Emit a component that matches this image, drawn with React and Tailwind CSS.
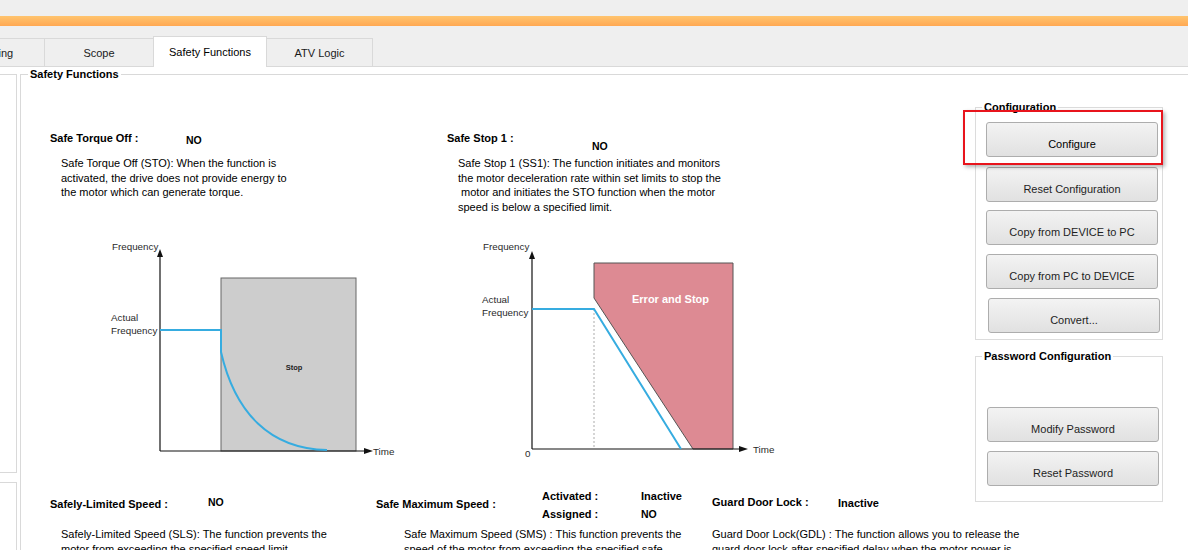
const Btn = ({ children, className = '' }) => (
  <button
    className={`flex h-[35px] w-[172px] justify-center rounded-[3px] border border-[#adadad] bg-linear-to-b from-[#f3f3f3] to-[#e1e1e1] pt-[14px] text-[11px] leading-[14px] text-[#1e1e1e] ${className}`}
  >
    {children}
  </button>
);

const Tab = ({ children, className = '' }) => (
  <div
    className={`flex h-[28px] items-center justify-center border-x border-t border-[#d9d9d9] bg-[#efefef] text-[#1a1a1a] ${className}`}
  >
    {children}
  </div>
);

const StoChart = () => (
  <svg width="300" height="225" className="ml-[50px] mt-[24px] block" fontFamily="Liberation Sans, Arial, sans-serif">
    <text x="12" y="12" fontSize="9.8" fill="#2a2a2a">Frequency</text>
    <rect x="121" y="40" width="135" height="173" fill="#cdcdcd" stroke="#666" strokeWidth="1" />
    <line x1="60" y1="17" x2="60" y2="213" stroke="#111" strokeWidth="1.2" />
    <polygon points="60,11 57,19 63,19" fill="#111" />
    <line x1="60" y1="213" x2="266" y2="213" stroke="#111" strokeWidth="1.2" />
    <polygon points="273,213 264,210 264,216" fill="#111" />
    <text x="273" y="216.5" fontSize="9.8" fill="#2a2a2a">Time</text>
    <text x="11" y="83" fontSize="9.8" fill="#2a2a2a">Actual</text>
    <text x="11" y="96" fontSize="9.8" fill="#2a2a2a">Frequency</text>
    <text x="194" y="132" textAnchor="middle" fontSize="7.5" fontWeight="bold" fill="#222">Stop</text>
    <path d="M60,92 H121 V114 C135,175 170,211 227,212" fill="none" stroke="#36ace0" strokeWidth="2" />
  </svg>
);

const Ss1Chart = () => (
  <svg width="310" height="225" className="ml-[23px] mt-[24px] block" fontFamily="Liberation Sans, Arial, sans-serif">
    <text x="13" y="12" fontSize="9.8" fill="#2a2a2a">Frequency</text>
    <polygon points="124,25 263,25 263,211 223,211 124,60" fill="#dd8a93" stroke="#555" strokeWidth="1" />
    <line x1="124" y1="71" x2="124" y2="211" stroke="#888" strokeWidth="0.7" strokeDasharray="2 2" />
    <line x1="62" y1="19" x2="62" y2="211" stroke="#111" strokeWidth="1.2" />
    <polygon points="62,13 59,21 65,21" fill="#111" />
    <line x1="62" y1="211" x2="271" y2="211" stroke="#111" strokeWidth="1.2" />
    <polygon points="278,211 269,208 269,214" fill="#111" />
    <text x="283" y="214.5" fontSize="9.8" fill="#2a2a2a">Time</text>
    <text x="55" y="219" fontSize="9.8" fill="#2a2a2a">0</text>
    <text x="162" y="65" fontSize="11" fontWeight="bold" fill="#fff">Error and Stop</text>
    <text x="12" y="65" fontSize="9.8" fill="#2a2a2a">Actual</text>
    <text x="12" y="78" fontSize="9.8" fill="#2a2a2a">Frequency</text>
    <polyline points="62,71 124,71 211,211" fill="none" stroke="#36ace0" strokeWidth="2" />
  </svg>
);

export default function App() {
  return (
    <div className="h-[550px] w-[1188px] overflow-hidden bg-white font-['Liberation_Sans',Arial,sans-serif] text-[11px] leading-[14px] text-black">
      {/* window chrome */}
      <div className="h-[16px] bg-[#efefef]" />
      <div className="h-[10px] bg-linear-to-b from-[#ffc46e] to-[#ffa852]" />

      {/* tabs */}
      <div className="flex h-[41px] items-end border-b border-[#d9d9d9] bg-[#efefef]">
        <Tab className="-ml-[70px] w-[115px] shrink-0">Monitoring</Tab>
        <Tab className="-ml-px w-[110px] shrink-0">Scope</Tab>
        <div className="relative z-10 -mb-px -ml-px flex h-[31px] w-[114px] shrink-0 items-center justify-center border-x border-t border-[#d9d9d9] bg-white">
          Safety Functions
        </div>
        <Tab className="-ml-px w-[107px] shrink-0">ATV Logic</Tab>
      </div>

      <div className="flex">
        {/* left side panel */}
        <div className="w-[17px] shrink-0">
          <div className="mt-[7px] h-[399px] border-y border-r border-[#d9d9d9]" />
          <div className="mt-[9px] h-[100px] border-r border-t border-[#d9d9d9]" />
        </div>

        <fieldset className="ml-[3px] w-[1200px] shrink-0 border-l border-t border-[#d9d9d9]">
          <legend className="ml-[7px] px-[2px] font-bold leading-[15px]">Safety Functions</legend>
          <div className="flex">
            {/* functions */}
            <div className="w-[954px] shrink-0">
              <div className="flex pl-[29px] pt-[49px]">
                <div className="w-[397px] shrink-0">
                  <div className="flex items-start">
                    <span className="w-[136px] font-bold">Safe Torque Off :</span>
                    <span className="mt-[2px] text-[10.5px] font-bold">NO</span>
                  </div>
                  <p className="ml-[11px] mt-[9px] h-[58px] leading-[14.5px]">
                    Safe Torque Off (STO): When the function is
                    <br />
                    activated, the drive does not provide energy to
                    <br />
                    the motor which can generate torque.
                  </p>
                  <StoChart />
                </div>
                <div className="w-[400px] shrink-0">
                  <div className="flex items-start">
                    <span className="w-[145px] font-bold">Safe Stop 1 :</span>
                    <span className="mt-[8px] text-[10.5px] font-bold">NO</span>
                  </div>
                  <p className="ml-[11px] mt-[3px] h-[58px] leading-[14.5px]">
                    Safe Stop 1 (SS1): The function initiates and monitors
                    <br />
                    the motor deceleration rate within set limits to stop the
                    <br />
                    &nbsp;motor and initiates the STO function when the motor
                    <br />
                    speed is below a specified limit.
                  </p>
                  <Ss1Chart />
                </div>
              </div>

              <div className="mt-[26px] flex pl-[29px]">
                <div className="w-[326px] shrink-0">
                  <div className="flex h-[38px] items-start">
                    <span className="w-[158px] pt-[8px] font-bold">Safely-Limited Speed :</span>
                    <span className="pt-[6px] text-[10.5px] font-bold">NO</span>
                  </div>
                  <p className="ml-[11px] leading-[14.5px]">
                    Safely-Limited Speed (SLS): The function prevents the
                    <br />
                    motor from exceeding the specified speed limit.
                  </p>
                </div>
                <div className="w-[336px] shrink-0">
                  <div className="flex h-[38px] items-start">
                    <span className="w-[166px] pt-[8px] font-bold">Safe Maximum Speed :</span>
                    <div className="grid grid-cols-[99px_auto] gap-y-[4px] font-bold">
                      <span>Activated :</span>
                      <span>Inactive</span>
                      <span>Assigned :</span>
                      <span className="text-[10.5px]">NO</span>
                    </div>
                  </div>
                  <p className="ml-[28px] leading-[14.5px]">
                    Safe Maximum Speed (SMS) : This function prevents the
                    <br />
                    speed of the motor from exceeding the specified safe
                    <br />
                    maximum speed.
                  </p>
                </div>
                <div className="w-[330px] shrink-0">
                  <div className="flex h-[38px] items-start">
                    <span className="w-[126px] pt-[6px] font-bold">Guard Door Lock :</span>
                    <span className="pt-[7px] font-bold">Inactive</span>
                  </div>
                  <p className="leading-[14.5px]">
                    Guard Door Lock(GDL) : The function allows you to release the
                    <br />
                    guard door lock after specified delay when the motor power is
                    <br />
                    switched off.
                  </p>
                </div>
              </div>
            </div>

            {/* configuration column */}
            <div className="w-[188px] shrink-0">
              <fieldset className="mt-[18px] border border-[#dcdcdc] pb-[6px]">
                <legend className="ml-[6px] px-[2px] font-bold leading-[14px]">Configuration</legend>
                <div className="relative ml-[10px] mt-[8px] w-[172px]">
                  <div className="pointer-events-none absolute -left-[23px] -top-[12px] h-[55px] w-[200px] border-2 border-[#e8141c] shadow-[2px_2px_4px_rgba(0,0,0,0.3)]" />
                  <Btn className="text-black">Configure</Btn>
                </div>
                <Btn className="ml-[10px] mt-[10px]">Reset Configuration</Btn>
                <Btn className="ml-[10px] mt-[8px]">Copy from DEVICE to PC</Btn>
                <Btn className="ml-[10px] mt-[9px]">Copy from PC to DEVICE</Btn>
                <Btn className="ml-[12px] mt-[9px] w-[170px]">Convert...</Btn>
              </fieldset>

              <fieldset className="mt-[9px] border border-[#dcdcdc] pb-[15px]">
                <legend className="ml-[6px] px-[2px] font-bold leading-[14px]">Password Configuration</legend>
                <Btn className="ml-[11px] mt-[44px] w-[171px]">Modify Password</Btn>
                <Btn className="ml-[11px] mt-[9px] w-[171px]">Reset Password</Btn>
              </fieldset>
            </div>
          </div>
        </fieldset>
      </div>
    </div>
  );
}
